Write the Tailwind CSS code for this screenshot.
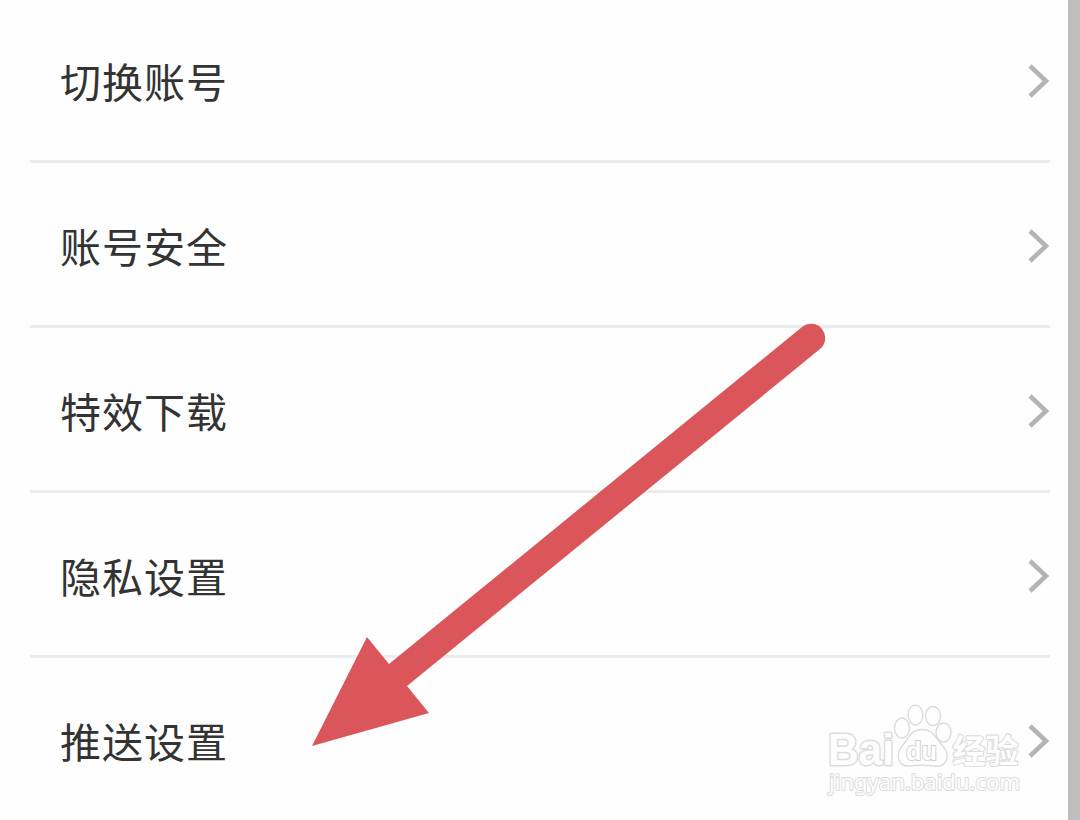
<!DOCTYPE html>
<html lang="zh-CN">
<head>
    <meta charset="UTF-8">
    <meta name="viewport" content="width=device-width, initial-scale=1.0">
    <title>设置</title>
    <script src="https://cdn.jsdelivr.net/npm/@tailwindcss/browser@4"></script>
</head>
<body class="relative flex w-[1080px] h-[820px] overflow-hidden bg-[#fefefe] font-['Noto_Sans_CJK_SC',sans-serif]">
    <ul class="flex-1 pl-[30px] pr-[18px] text-[41px] leading-none tracking-[1px] text-[#333333]">
        <li class="flex items-center justify-between h-[163px] pt-px pl-[30px] border-b-3 border-[#ececec]">
            <span>切换账号</span>
            <svg class="w-6 h-9" viewBox="0 0 24 36" fill="none" stroke="#b4b4b4" stroke-width="4.500"><path d="M4 3l16 15L4 33"/></svg>
        </li>
        <li class="flex items-center justify-between h-[165px] pt-[3px] pl-[30px] border-b-3 border-[#ececec]">
            <span>账号安全</span>
            <svg class="w-6 h-9" viewBox="0 0 24 36" fill="none" stroke="#b4b4b4" stroke-width="4.500"><path d="M4 3l16 15L4 33"/></svg>
        </li>
        <li class="flex items-center justify-between h-[165px] pt-[3px] pl-[30px] border-b-3 border-[#ececec]">
            <span>特效下载</span>
            <svg class="w-6 h-9" viewBox="0 0 24 36" fill="none" stroke="#b4b4b4" stroke-width="4.500"><path d="M4 3l16 15L4 33"/></svg>
        </li>
        <li class="flex items-center justify-between h-[165px] pt-[3px] pl-[30px] border-b-3 border-[#ececec]">
            <span>隐私设置</span>
            <svg class="w-6 h-9" viewBox="0 0 24 36" fill="none" stroke="#b4b4b4" stroke-width="4.500"><path d="M4 3l16 15L4 33"/></svg>
        </li>
        <li class="flex items-center justify-between h-[165px] pl-[30px]">
            <span>推送设置</span>
            <svg class="w-6 h-9" viewBox="0 0 24 36" fill="none" stroke="#b4b4b4" stroke-width="4.500"><path d="M4 3l16 15L4 33"/></svg>
        </li>
    </ul>
    <div class="w-3 bg-[#bebebe]"></div>

    <!-- arrow -->
    <svg class="absolute inset-0 w-[1080px] h-[820px]" viewBox="0 0 1080 820" fill="#da565b">
        <path d="M312 746L367 637L389 664L802 327A14 14 0 0 1 820 349L407 686L429 713Z"/>
    </svg>

    <!-- watermark -->
    <svg class="absolute left-[820px] top-[695px] w-[210px] h-[110px]" viewBox="0 0 210 110" fill="#fefefe" stroke="#dcdcdc" stroke-width="1.400">
        <text x="8" y="70" font-family="Liberation Sans, sans-serif" font-weight="700" font-size="44" textLength="66" lengthAdjust="spacingAndGlyphs" stroke-width="3" stroke-linejoin="round" paint-order="stroke">Bai</text>
        <ellipse cx="82" cy="33" rx="7.500" ry="10"/>
        <ellipse cx="95.500" cy="20" rx="7.300" ry="10"/>
        <ellipse cx="113" cy="21" rx="7.500" ry="9.500"/>
        <ellipse cx="123.500" cy="37.500" rx="7.500" ry="9.500"/>
        <path d="M102 34.500C93 34.500 89 41 86 46C82 52 78 54 78.500 62C79 69 84 71.500 90 71C98 70 106 70 114 71C121 72 126 69 127 62C127.500 54 122 51 118 45C114 39 110 34.500 102 34.500Z"/>
        <text x="86" y="64.500" font-family="Liberation Sans, sans-serif" font-weight="700" font-size="26" textLength="31" lengthAdjust="spacingAndGlyphs" stroke="#d2d2d2" stroke-width="2" paint-order="stroke">du</text>
        <text x="132.500" y="68" font-family="Noto Sans CJK SC, sans-serif" font-weight="700" font-size="33" textLength="66" lengthAdjust="spacingAndGlyphs" stroke-width="2.200" stroke-linejoin="round" paint-order="stroke">经验</text>
        <text x="9" y="95" font-family="Noto Sans, sans-serif" font-size="22" textLength="191" lengthAdjust="spacingAndGlyphs" stroke-width="2" stroke-linejoin="round" paint-order="stroke">jingyan.baidu.com</text>
    </svg>
</body>
</html>
